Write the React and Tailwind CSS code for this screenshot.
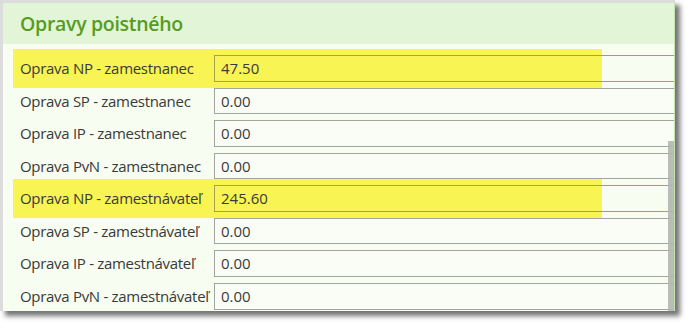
import React from "react";

const rows = [
  { label: "Oprava NP - zamestnanec", value: "47.50", hl: true },
  { label: "Oprava SP - zamestnanec", value: "0.00" },
  { label: "Oprava IP - zamestnanec", value: "0.00" },
  { label: "Oprava PvN - zamestnanec", value: "0.00" },
  { label: "Oprava NP - zamestnávateľ", value: "245.60", hl: true },
  { label: "Oprava SP - zamestnávateľ", value: "0.00" },
  { label: "Oprava IP - zamestnávateľ", value: "0.00" },
  { label: "Oprava PvN - zamestnávateľ", value: "0.00" },
];

export default function App() {
  return (
    <div className="w-[690px] h-[328px] bg-white overflow-hidden font-['Open_Sans',sans-serif]">
      <div className="w-[675px] h-[311px] bg-white border-t-[3px] border-l-[3px] border-[#dcdcdc] shadow-[5px_5px_5px_rgba(0,0,0,0.55)] flex">
        <div className="relative flex-1 h-full flex flex-col bg-[#f7fdf0] border-r border-[#c6e4b0] overflow-hidden">
          <div className="h-[41px] shrink-0 bg-[#e2f5d7] flex items-center pl-[17px] pt-[1px]">
            <span className="text-[19.5px] font-semibold text-[#559c21] leading-none tracking-[-0.3px]">
              Opravy poistného
            </span>
          </div>
          <div className="flex flex-col pt-[8px]">
            {rows.map((r, i) => (
              <div key={i} className="relative h-[32.57px] flex items-center">
                {r.hl && (
                  <div className="absolute left-[10px] w-[589px] -top-[3px] -bottom-[3px] bg-[#f8f453]" />
                )}
                <div className="relative w-[211px] shrink-0 pl-[17px] text-[15px] text-[#3a3a3a] whitespace-nowrap tracking-[-0.3px]">
                  {r.label}
                </div>
                <div
                  className={
                    "relative flex-1 h-[26.6px] -mr-[2px] border flex items-center pl-[6px] text-[15px] text-[#3a3a3a] " +
                    (r.hl ? "border-[#aaa24a] bg-transparent" : "border-[#a3a6a0] bg-[#fafdf6]")
                  }
                >
                  {r.value}
                </div>
              </div>
            ))}
          </div>
          <div className="absolute right-0 top-[138px] bottom-0 w-[6px] bg-[#b2b6ae]/90" />
        </div>
      </div>
    </div>
  );
}
